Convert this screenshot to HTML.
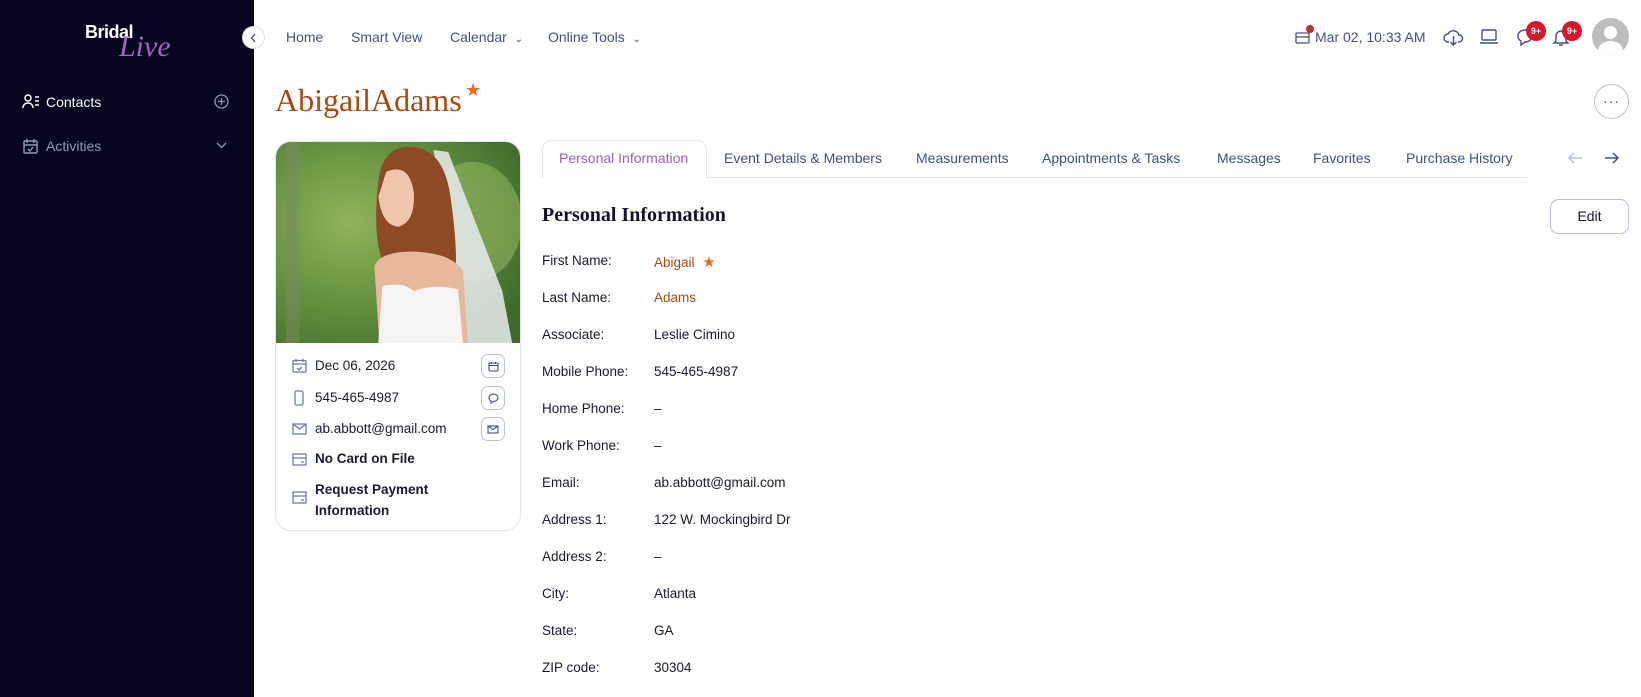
<!DOCTYPE html>
<html><head><meta charset="utf-8"><style>
*{box-sizing:border-box;margin:0;padding:0}
body{width:1641px;height:697px;overflow:hidden;background:#fff;font-family:"Liberation Sans",sans-serif;position:relative;color:#1a1a2e}
.abs{position:absolute;white-space:nowrap}
#side{position:absolute;left:0;top:0;width:254px;height:697px;background:#07041f}
.nav{top:28px;font-size:14px;color:#44507a}
.tab{top:150px;font-size:14px;color:#44507a}
.lbl{left:542px;font-size:13.5px;color:#1a1a2e}
.val{left:654px;font-size:13.5px;color:#1a1a2e}
.ci{font-size:13.5px;color:#1a1a2e;left:315px}
.btn{position:absolute;left:481px;width:24px;height:24px;border:1px solid #b8c0dc;border-radius:7px}
.badge{position:absolute;width:20px;height:20px;border-radius:50%;background:#d9142b;color:#fff;font-size:9px;font-weight:bold;text-align:center;line-height:20px}
</style></head><body>
<div id="side">
 <div class="abs" style="left:85px;top:22px;color:#fff;font-size:18px;font-weight:bold;letter-spacing:-0.5px">Bridal</div>
 <div class="abs" style="left:119px;top:30px;color:#9d6ac0;font-size:30px;font-family:'Liberation Serif',serif;font-style:italic">Live</div>
 <svg class="abs" style="left:22px;top:93px" width="18" height="16" viewBox="0 0 18 16" fill="none" stroke="#fff" stroke-width="1.5"><circle cx="6" cy="5" r="3"/><path d="M1 15c0-3 2-5 5-5s5 2 5 5M13 4h4M13 8h4M13 12h4"/></svg>
 <div class="abs" style="left:46px;top:94px;color:#fff;font-size:14px">Contacts</div>
 <svg class="abs" style="left:214px;top:94px" width="15" height="15" fill="none" stroke="#8e9ab8" stroke-width="1.3"><circle cx="7.5" cy="7.5" r="6.5"/><path d="M7.5 4v7M4 7.5h7"/></svg>
 <svg class="abs" style="left:23px;top:138px" width="15" height="16" fill="none" stroke="#8e9ab8" stroke-width="1.4"><rect x="1" y="3" width="13" height="12" rx="1"/><path d="M1 7h13M4 1v4M11 1v4M5 11l2 2 3-4"/></svg>
 <div class="abs" style="left:46px;top:138px;color:#8e9ab8;font-size:14px">Activities</div>
 <svg class="abs" style="left:216px;top:142px" width="11" height="7" fill="none" stroke="#8e9ab8" stroke-width="1.3"><path d="M1 1l4.5 4.5L10 1"/></svg>
</div>
<div class="abs" style="left:242px;top:26px;width:23px;height:23px;border-radius:50%;background:#fff;border:1px solid #dde"></div>
<svg class="abs" style="left:250px;top:33px" width="7" height="10" fill="none" stroke="#44507a" stroke-width="1.3"><path d="M5 1L1.5 5 5 9"/></svg>

<div class="abs nav" style="left:286px;top:29px">Home</div>
<div class="abs nav" style="left:351px;top:29px">Smart View</div>
<div class="abs nav" style="left:450px;top:29px">Calendar &nbsp;<span style="font-size:10px">&#8964;</span></div>
<div class="abs nav" style="left:548px;top:29px">Online Tools &nbsp;<span style="font-size:10px">&#8964;</span></div>

<svg class="abs" style="left:1295px;top:30px" width="16" height="14" fill="none" stroke="#44507a" stroke-width="1.3"><rect x="1" y="3" width="13" height="10" rx="1"/><path d="M1 7h13"/></svg>
<div class="abs" style="left:1306px;top:25px;width:8px;height:8px;border-radius:50%;background:#c62a3a"></div>
<div class="abs" style="left:1315px;top:29px;font-size:14px;color:#44507a">Mar 02, 10:33 AM</div>
<svg class="abs" style="left:1443px;top:27px" width="21" height="20" fill="none" stroke="#44507a" stroke-width="1.4"><path d="M6 15H5a4 4 0 010-8 6 6 0 0111 1 3.5 3.5 0 010 7h-1M10.5 9v9M7.5 15l3 3 3-3"/></svg>
<svg class="abs" style="left:1479px;top:29px" width="20" height="16" fill="none" stroke="#44507a" stroke-width="1.4"><rect x="3" y="1" width="14" height="10" rx="1"/><path d="M1 14h18"/></svg>
<svg class="abs" style="left:1516px;top:28px" width="18" height="18" fill="none" stroke="#44507a" stroke-width="1.4"><path d="M9 2c4 0 7 2.5 7 6s-3 6-7 6l-4 3v-4C3 12 2 10 2 8c0-3.5 3-6 7-6z"/></svg>
<svg class="abs" style="left:1552px;top:28px" width="18" height="19" fill="none" stroke="#44507a" stroke-width="1.4"><path d="M4 13V8a5 5 0 0110 0v5l2 2H2zM7 17h4"/></svg>
<div class="badge" style="left:1526px;top:21px">9+</div>
<div class="badge" style="left:1562px;top:21px">9+</div>
<div class="abs" style="left:1592px;top:18px;width:37px;height:37px;border-radius:50%;background:#bdbdbd;overflow:hidden"><div style="position:absolute;left:12px;top:8px;width:13px;height:13px;border-radius:50%;background:#fff"></div><div style="position:absolute;left:6px;top:23px;width:25px;height:20px;border-radius:50%;background:#fff"></div></div>

<div class="abs" style="left:275px;top:82px;font-family:'Liberation Serif',serif;font-size:32px;color:#a74a10">AbigailAdams</div>
<div class="abs" style="left:465px;top:80px;color:#ee6a1c;font-size:18px">&#9733;</div>
<div class="abs" style="left:1594px;top:84px;width:35px;height:35px;border-radius:50%;border:1px solid #b8c0dc;text-align:center;line-height:32px;color:#44507a;font-size:14px;letter-spacing:1px">&middot;&middot;&middot;</div>

<div class="abs" style="left:275px;top:141px;width:246px;height:390px;border:1px solid #e2e5ee;border-radius:16px;overflow:hidden">
<svg width="246" height="201" viewBox="0 0 250 202" preserveAspectRatio="none" style="display:block">
<defs><radialGradient id="g" cx="30%" cy="40%" r="80%"><stop offset="0" stop-color="#8fb55a"/><stop offset=".6" stop-color="#5d8a3a"/><stop offset="1" stop-color="#3f6a2c"/></radialGradient></defs>
<rect width="250" height="202" fill="url(#g)"/>
<rect x="10" y="0" width="14" height="202" fill="#7a8a60" opacity=".5"/>
<ellipse cx="200" cy="80" rx="50" ry="60" fill="#9bbd68" opacity=".5"/>
<path d="M160 8 L175 10 L230 150 L240 202 L190 202 L170 60Z" fill="#e8ecef" opacity=".85"/>
<path d="M104 40 Q108 2 140 5 Q172 8 178 60 Q185 110 182 135 L150 140 Q110 130 108 120 Q98 90 104 40Z" fill="#8d4a25"/>
<path d="M112 30 Q135 20 140 50 Q142 80 125 85 Q108 85 104 55Z" fill="#efc6ac"/>
<path d="M100 125 Q105 110 140 110 Q180 112 190 130 L195 202 L105 202Z" fill="#e7b89c"/>
<path d="M108 145 Q130 140 140 150 Q160 142 185 148 L190 202 L104 202Z" fill="#f6f4f2"/>
</svg>
</div>
<svg class="abs" style="left:292px;top:358px" width="15" height="15" fill="none" stroke="#6e7ba6" stroke-width="1.3"><rect x="1" y="2.5" width="13" height="11.5" rx="1"/><path d="M1 6h13M4 1v3M11 1v3M5 10l2 2 3-3"/></svg>
<div class="abs ci" style="top:358px">Dec 06, 2026</div>
<div class="btn" style="top:354px"></div>
<svg class="abs" style="left:488px;top:361px" width="11" height="11" fill="none" stroke="#44507a" stroke-width="1.1"><rect x="1" y="2" width="9" height="8" rx="1"/><path d="M1 4.5h9M3.5 1v2M7.5 1v2"/></svg>
<svg class="abs" style="left:294px;top:390px" width="10" height="16" fill="none" stroke="#6e7ba6" stroke-width="1.3"><rect x="1" y="1" width="8" height="14" rx="1.5"/></svg>
<div class="abs ci" style="top:390px">545-465-4987</div>
<div class="btn" style="top:386px"></div>
<svg class="abs" style="left:488px;top:393px" width="11" height="11" fill="none" stroke="#44507a" stroke-width="1.1"><path d="M5.5 1c2.5 0 4.5 1.6 4.5 3.7S8 8.4 5.5 8.4L3 10V8C1.8 7.4 1 6 1 4.7 1 2.6 3 1 5.5 1z"/></svg>
<svg class="abs" style="left:292px;top:423px" width="15" height="12" fill="none" stroke="#6e7ba6" stroke-width="1.3"><rect x="1" y="1" width="13" height="10"/><path d="M1 1l6.5 5L14 1"/></svg>
<div class="abs ci" style="top:421px">ab.abbott@gmail.com</div>
<div class="btn" style="top:417px"></div>
<svg class="abs" style="left:487px;top:425px" width="12" height="9" fill="none" stroke="#44507a" stroke-width="1.1"><rect x="1" y="1" width="10" height="7"/><path d="M1 1l5 3.5L11 1"/></svg>
<svg class="abs" style="left:292px;top:453px" width="15" height="13" fill="none" stroke="#6e7ba6" stroke-width="1.3"><rect x="1" y="1" width="13" height="11"/><path d="M1 5h13M9 9h3"/></svg>
<div class="abs ci" style="top:451px;font-weight:bold">No Card on File</div>
<svg class="abs" style="left:292px;top:491px" width="15" height="13" fill="none" stroke="#6e7ba6" stroke-width="1.3"><rect x="1" y="1" width="13" height="11"/><path d="M1 5h13M9 9h3"/></svg>
<div class="abs ci" style="top:479px;font-weight:bold;line-height:21px;white-space:normal">Request Payment<br>Information</div>

<div class="abs" style="left:542px;top:177px;width:985px;height:1px;background:#e2e4ea"></div>
<div class="abs" style="left:542px;top:140px;width:165px;height:38px;border:1px solid #e2e4ea;border-bottom:none;border-radius:10px 10px 0 0;background:#fff"></div>
<div class="abs tab" style="left:559px;color:#9b5fc0">Personal Information</div>
<div class="abs tab" style="left:724px">Event Details &amp; Members</div>
<div class="abs tab" style="left:916px">Measurements</div>
<div class="abs tab" style="left:1042px">Appointments &amp; Tasks</div>
<div class="abs tab" style="left:1217px">Messages</div>
<div class="abs tab" style="left:1313px">Favorites</div>
<div class="abs tab" style="left:1406px">Purchase History</div>
<svg class="abs" style="left:1567px;top:151px" width="16" height="14" fill="none" stroke="#b8c0d8" stroke-width="1.5"><path d="M15 7H2M7 2L2 7l5 5"/></svg>
<svg class="abs" style="left:1604px;top:151px" width="16" height="14" fill="none" stroke="#44507a" stroke-width="1.5"><path d="M1 7h13M9 2l5 5-5 5"/></svg>

<div class="abs" style="left:542px;top:204px;font-family:'Liberation Serif',serif;font-weight:bold;font-size:20px;color:#14142b">Personal Information</div>
<div class="abs" style="left:1550px;top:199px;width:79px;height:35px;border:1px solid #b8c0dc;border-radius:9px;text-align:center;line-height:33px;font-size:14px;color:#14142b">Edit</div>

<div class="abs lbl" style="top:253px">First Name:</div><div class="abs val" style="top:253px;color:#a74a10">Abigail <span style="color:#ee6a1c;font-size:15px;margin-left:4px">&#9733;</span></div>
<div class="abs lbl" style="top:290px">Last Name:</div><div class="abs val" style="top:290px;color:#a74a10">Adams</div>
<div class="abs lbl" style="top:327px">Associate:</div><div class="abs val" style="top:327px">Leslie Cimino</div>
<div class="abs lbl" style="top:364px">Mobile Phone:</div><div class="abs val" style="top:364px">545-465-4987</div>
<div class="abs lbl" style="top:401px">Home Phone:</div><div class="abs val" style="top:401px">–</div>
<div class="abs lbl" style="top:438px">Work Phone:</div><div class="abs val" style="top:438px">–</div>
<div class="abs lbl" style="top:475px">Email:</div><div class="abs val" style="top:475px">ab.abbott@gmail.com</div>
<div class="abs lbl" style="top:512px">Address 1:</div><div class="abs val" style="top:512px">122 W. Mockingbird Dr</div>
<div class="abs lbl" style="top:549px">Address 2:</div><div class="abs val" style="top:549px">–</div>
<div class="abs lbl" style="top:586px">City:</div><div class="abs val" style="top:586px">Atlanta</div>
<div class="abs lbl" style="top:623px">State:</div><div class="abs val" style="top:623px">GA</div>
<div class="abs lbl" style="top:660px">ZIP code:</div><div class="abs val" style="top:660px">30304</div>
</body></html>
